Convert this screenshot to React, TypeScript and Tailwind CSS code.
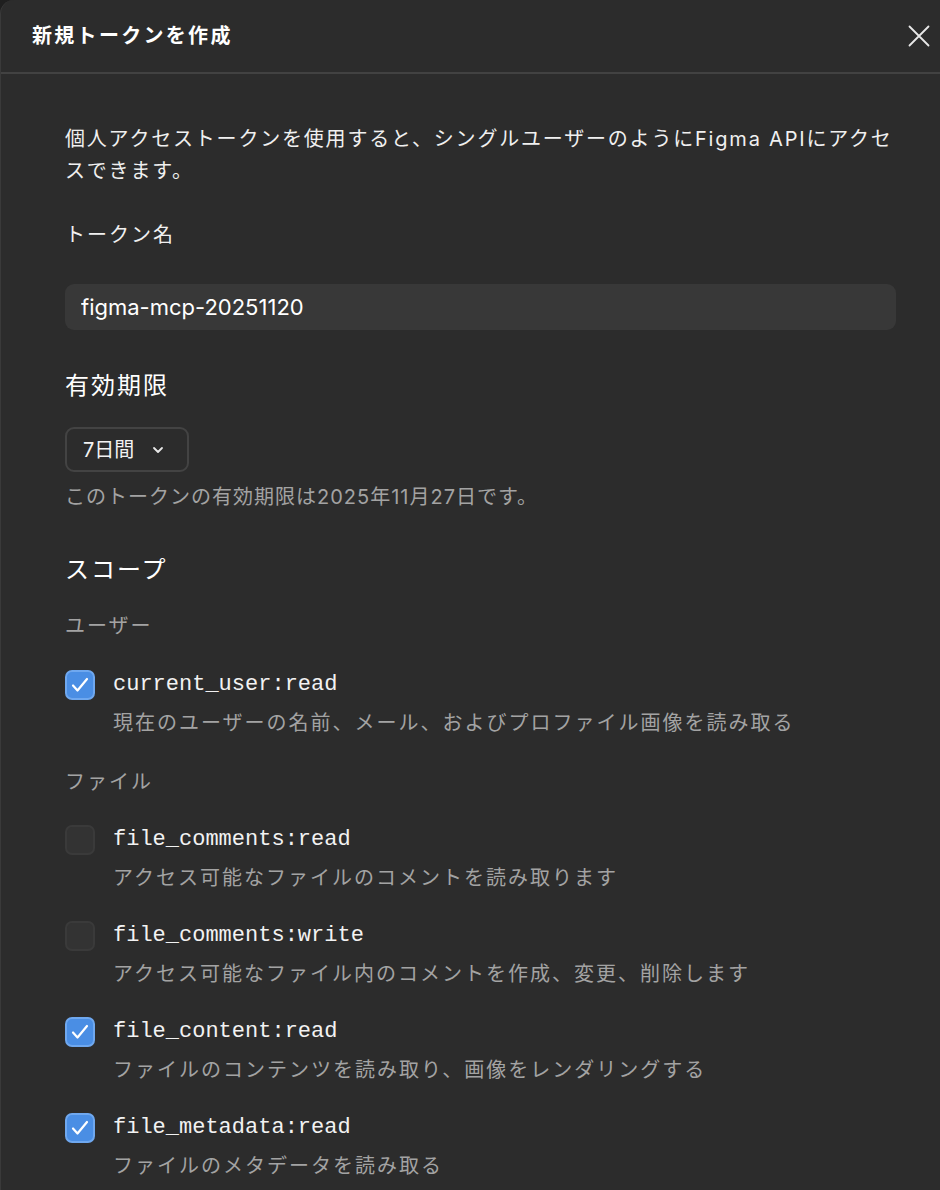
import React, { useState } from 'react';

const sans = 'font-["Inter","Noto_Sans_CJK_JP",sans-serif]';
const mono = 'font-["Liberation_Mono","DejaVu_Sans_Mono",monospace]';

type Scope = { id: string; desc: string; checked: boolean };

const userScopes: Scope[] = [
  { id: 'current_user:read', desc: '現在のユーザーの名前、メール、およびプロファイル画像を読み取る', checked: true },
];

const fileScopes: Scope[] = [
  { id: 'file_comments:read', desc: 'アクセス可能なファイルのコメントを読み取ります', checked: false },
  { id: 'file_comments:write', desc: 'アクセス可能なファイル内のコメントを作成、変更、削除します', checked: false },
  { id: 'file_content:read', desc: 'ファイルのコンテンツを読み取り、画像をレンダリングする', checked: true },
  { id: 'file_metadata:read', desc: 'ファイルのメタデータを読み取る', checked: true },
];

function Checkbox({ checked, onChange }: { checked: boolean; onChange: () => void }) {
  return (
    <button
      onClick={onChange}
      className={`mt-px w-[30px] h-[30px] shrink-0 rounded-[7px] border-2 flex items-center justify-center ${
        checked ? 'bg-[#4a8ee4] border-[#6fa8ef]' : 'bg-[#333333] border-[#3a3a3a]'
      }`}
    >
      {checked && (
        <svg width="22" height="22" viewBox="0 0 22 22" fill="none">
          <path d="M4 11.5l4.5 5L18 5" stroke="white" strokeWidth="2.2" strokeLinecap="round" strokeLinejoin="round" />
        </svg>
      )}
    </button>
  );
}

function ScopeRow({ scope }: { scope: Scope }) {
  const [on, setOn] = useState(scope.checked);
  return (
    <div className="flex gap-[18px]">
      <Checkbox checked={on} onChange={() => setOn(!on)} />
      <div>
        <div className={`${mono} text-[22px] leading-[32px] text-[#f2f2f2]`}>{scope.id}</div>
        <div className="mt-[6px] text-[20px] leading-[32px] tracking-[2px] text-[#a3a3a3]">{scope.desc}</div>
      </div>
    </div>
  );
}

export default function App() {
  const [name, setName] = useState('figma-mcp-20251120');

  return (
    <div className={`${sans} min-h-screen bg-[#1f1f1f]`}>
      <div className="min-h-[1190px] bg-[#2c2c2c] rounded-tl-[14px] border-l border-[#3a3a3a]">
        {/* header */}
        <div className="h-[74px] flex items-center justify-between pl-[31px] pr-[1px] border-b-2 border-[#424242]">
          <h1 className="text-[20px] font-bold tracking-[2.3px] text-white">新規トークンを作成</h1>
          <button className="w-[40px] h-[40px] flex items-center justify-center">
            <svg width="22" height="22" viewBox="0 0 22 22" fill="none">
              <path d="M1.5 1.5l19 19M20.5 1.5l-19 19" stroke="#e8e8e8" strokeWidth="1.8" strokeLinecap="round" />
            </svg>
          </button>
        </div>

        {/* body */}
        <div className="pl-[64px] pr-[44px] pt-[49px] text-white">
          <p className="text-[20px] leading-[32px] tracking-[1.8px] text-[#f0f0f0]">
            個人アクセストークンを使用すると、シングルユーザーのようにFigma APIにアクセスできます。
          </p>

          <div className="mt-[32px] text-[20px] leading-[32px] tracking-[2px] text-[#f0f0f0]">トークン名</div>
          <input
            value={name}
            onChange={(e) => setName(e.target.value)}
            className="mt-[33px] w-full h-[46px] rounded-[9px] bg-[#383838] px-[16px] text-[22px] text-white outline-none"
          />

          <div className="mt-[38px] text-[24px] leading-[36px] tracking-[2px]">有効期限</div>
          <button className="mt-[23px] h-[45px] w-[124px] rounded-[9px] border-2 border-[#434343] flex items-center pl-[16px] gap-[18px]">
            <span className="text-[20px] text-[#f2f2f2]">7日間</span>
            <svg width="12" height="8" viewBox="0 0 12 8" fill="none">
              <path d="M2 2l4 4 4-4" stroke="#e8e8e8" strokeWidth="1.8" strokeLinecap="round" strokeLinejoin="round" />
            </svg>
          </button>
          <div className="mt-[9px] text-[20px] leading-[32px] tracking-[1px] text-[#a3a3a3]">
            このトークンの有効期限は2025年11月27日です。
          </div>

          <div className="mt-[39px] text-[24px] leading-[36px] tracking-[2px]">スコープ</div>

          <div className="mt-[22px] text-[20px] leading-[32px] tracking-[2px] text-[#a3a3a3]">ユーザー</div>
          <div className="mt-[27px] flex flex-col gap-[26px]">
            {userScopes.map((s) => (
              <ScopeRow key={s.id} scope={s} />
            ))}
          </div>

          <div className="mt-[27px] text-[20px] leading-[32px] tracking-[2px] text-[#a3a3a3]">ファイル</div>
          <div className="mt-[26px] flex flex-col gap-[26px]">
            {fileScopes.map((s) => (
              <ScopeRow key={s.id} scope={s} />
            ))}
          </div>
        </div>
      </div>
    </div>
  );
}
